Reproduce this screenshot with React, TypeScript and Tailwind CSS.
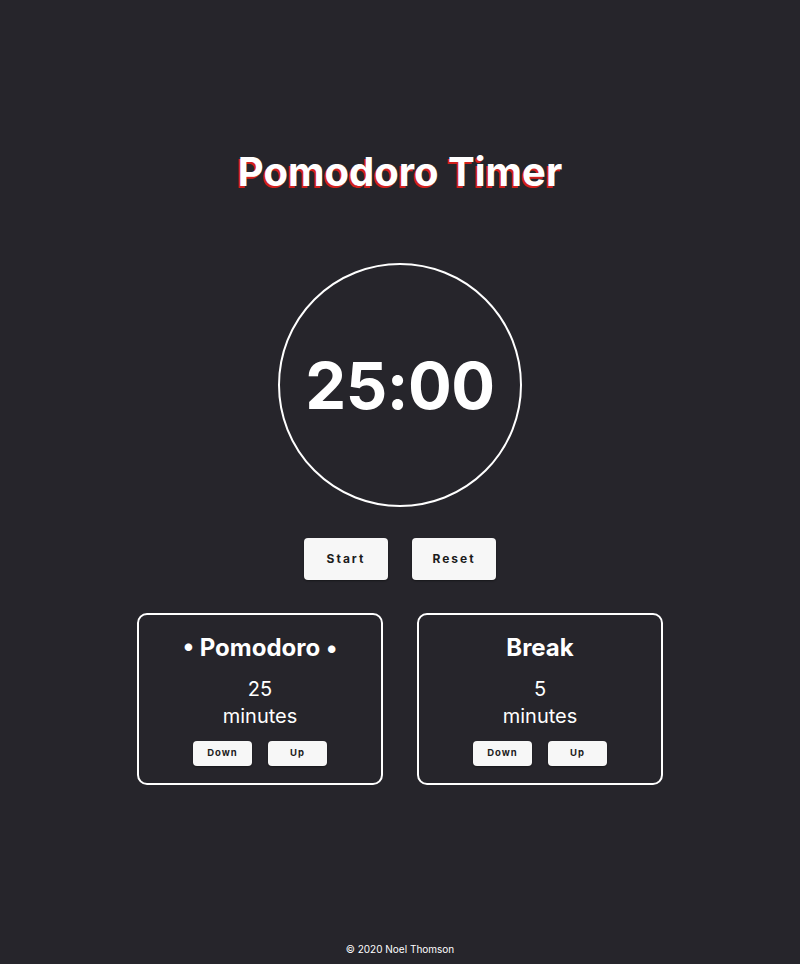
import React from "react";

const font = "font-['Inter','Noto_Sans','Liberation_Sans',sans-serif]";

function Btn({ label, big }: { label: string; big?: boolean }) {
  return (
    <button
      className={
        big
          ? "w-[84px] h-[42px] rounded-[4px] bg-[#f7f7f7] text-[#1c1c1c] text-[12px] font-bold tracking-[2px] shadow-[0_1px_2px_rgba(0,0,0,0.4)]"
          : "w-[59px] h-[25px] rounded-[4px] bg-[#f7f7f7] text-[#1c1c1c] text-[9.5px] font-bold tracking-[1px] shadow-[0_1px_2px_rgba(0,0,0,0.4)]"
      }
    >
      {label}
    </button>
  );
}

function Setting({ title, value, active }: { title: string; value: number; active?: boolean }) {
  return (
    <div className="w-[246px] h-[172px] rounded-[10px] border-2 border-white flex flex-col items-center pt-[21px]">
      <h2 className="text-[24px] leading-none font-bold">
        {active ? `• ${title} •` : title}
      </h2>
      <div className="mt-[16px] text-[20px] leading-[27px] text-center">
        <div>{value}</div>
        <div>minutes</div>
      </div>
      <div className="mt-[11px] flex gap-4">
        <Btn label="Down" />
        <Btn label="Up" />
      </div>
    </div>
  );
}

export default function App() {
  return (
    <div className={`min-h-screen bg-[#26252b] text-white flex flex-col items-center ${font}`}>
      {/* titulo */}
      <h1 className="mt-[152px] text-[40px] leading-none font-bold [text-shadow:-2px_2px_0_#d3201c]">
        Pomodoro Timer
      </h1>

      {/* reloj */}
      <div className="mt-[71px] w-[244px] h-[244px] rounded-full border-2 border-white flex items-center justify-center">
        <span className="text-[65px] leading-none font-bold tracking-[-0.5px]">25:00</span>
      </div>

      <div className="mt-[31px] flex gap-6">
        <Btn label="Start" big />
        <Btn label="Reset" big />
      </div>

      <div className="mt-[33px] flex gap-[34px]">
        <Setting title="Pomodoro" value={25} active />
        <Setting title="Break" value={5} />
      </div>

      <footer className="mt-auto pb-[9px] text-[10px] leading-[12px]">© 2020 Noel Thomson</footer>
    </div>
  );
}
